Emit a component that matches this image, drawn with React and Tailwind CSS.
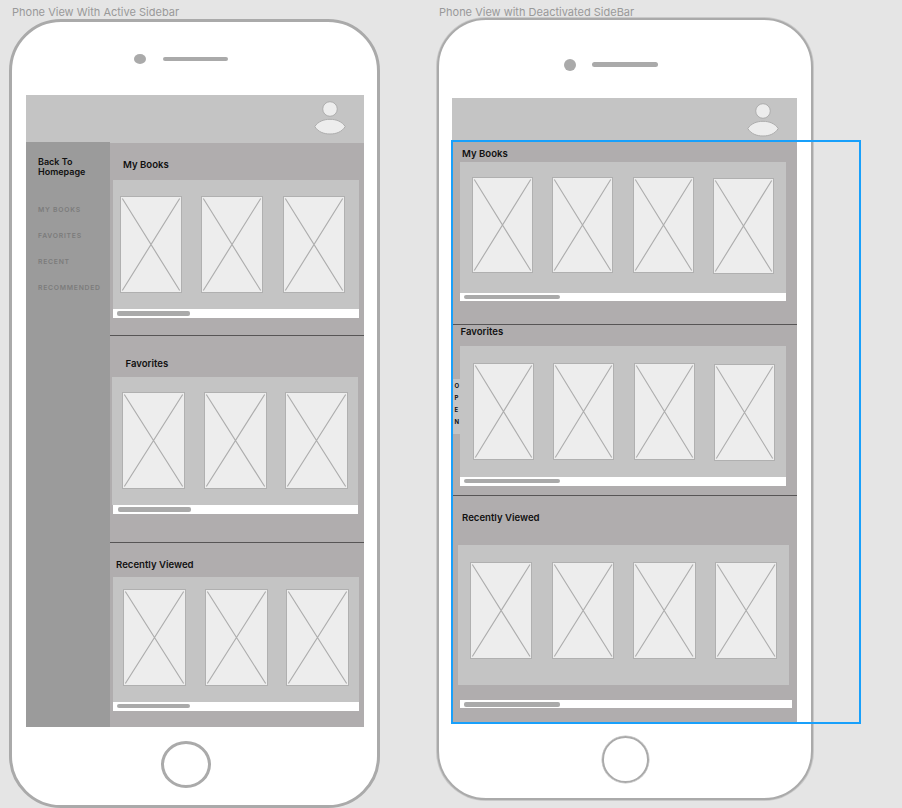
import React from "react";

function Placeholder({ className }) {
  return (
    <div className={`shrink-0 border border-[#b0b0b0] bg-[#ededed] ${className}`}>
      <svg className="block h-full w-full" viewBox="0 0 60 95" preserveAspectRatio="none">
        <path d="M1.3 1.5 58.7 93.5M58.7 1.5 1.3 93.5" stroke="#adadad" strokeWidth="1.15" fill="none" />
      </svg>
    </div>
  );
}

function Shelf({ title, count, section, heading, panel, card, track, thumb }) {
  return (
    <section className={`flex shrink-0 flex-col items-start ${section}`}>
      <h2 className={`h-3 whitespace-nowrap text-[9.6px] leading-3 font-semibold text-[#111] ${heading}`}>{title}</h2>
      <div className={`flex shrink-0 bg-[#c4c4c4] ${panel}`}>
        {Array.from({ length: count }, (_, i) => (
          <Placeholder key={i} className={card} />
        ))}
      </div>
      <div className={`flex shrink-0 bg-white ${track}`}>
        <div className={`rounded-[2px] bg-[#aaaaaa] ${thumb}`} />
      </div>
    </section>
  );
}

function Avatar({ className }) {
  return (
    <svg className={`block h-[36px] w-[34px] shrink-0 ${className}`} viewBox="0 0 34 36">
      <g fill="#ededed" stroke="#adadad" strokeWidth="1">
        <circle cx="17" cy="9" r="7.3" />
        <path d="M1.8 26.5C5 21.6 10.5 19.3 17 19.3S29 21.6 32.2 26.5C29 31.8 23.5 34 17 34S5 31.8 1.8 26.5Z" />
      </g>
    </svg>
  );
}

const links = ["MY BOOKS", "FAVORITES", "RECENT", "RECOMMENDED"];

function ActivePhone() {
  return (
    <div className="ml-[9px] w-[371px] shrink-0">
      <p className="h-[19px] pt-[5px] pl-[3px] text-[11px] leading-[14px] whitespace-nowrap text-[#999]">
        Phone View With Active Sidebar
      </p>
      <div className="flex h-[789px] w-[371px] flex-col rounded-[52px] border-3 border-[#aaaaaa] bg-white">
        <div className="flex h-[73px] shrink-0 items-center gap-[16.5px] pl-[122.4px]">
          <div className="h-[10px] w-[12px] rounded-[50%] bg-[#aaaaaa]" />
          <div className="h-[4px] w-[65px] rounded-full bg-[#aaaaaa]" />
        </div>
        <div className="ml-[14px] h-[632px] w-[338px] shrink-0 bg-[#c4c4c4]">
          <div className="flex h-[47px] justify-end pr-[17px]">
            <Avatar className="mt-[5px]" />
          </div>
          <div className="flex h-[585px]">
            <nav className="w-[84px] shrink-0 bg-[#9b9b9b] pl-[12px]">
              <p className="pt-[15px] text-[9px] leading-[9.5px] font-semibold text-[#111]">
                Back To
                <br />
                Homepage
              </p>
              <ul className="pt-[28px] text-[6.8px] font-semibold tracking-[0.75px] text-[#7c7c7c]">
                {links.map((link) => (
                  <li key={link} className="h-[26px] leading-[12px] whitespace-nowrap">
                    {link}
                  </li>
                ))}
              </ul>
            </nav>
            <div className="mt-px w-[254px] bg-[#b0adae]">
              <Shelf
                title="My Books"
                count={3}
                section="h-[193px] border-b border-[#575556]"
                heading="mt-[16px] ml-[13px]"
                panel="ml-[3px] mt-[9px] h-[129px] w-[246px] gap-[19.4px] pl-[7px] pt-[16px]"
                card="h-[97px] w-[62px]"
                track="ml-[3px] h-[9px] w-[246px] pl-[4px] pt-[2px]"
                thumb="h-[5px] w-[73px]"
              />
              <Shelf
                title="Favorites"
                count={3}
                section="h-[207px] border-b border-[#575556]"
                heading="mt-[22px] ml-[15.5px]"
                panel="ml-[2px] mt-[7px] h-[128px] w-[246px] gap-[18.7px] pl-[10px] pt-[15px]"
                card="h-[97px] w-[63px]"
                track="ml-[3px] h-[9px] w-[245px] pl-[5px] pt-[2px]"
                thumb="h-[5px] w-[73px]"
              />
              <Shelf
                title="Recently Viewed"
                count={3}
                section="h-[184px]"
                heading="mt-[16px] ml-[6px]"
                panel="ml-[3px] mt-[6px] h-[125px] w-[246px] gap-[18.7px] pl-[10px] pt-[12px]"
                card="h-[97px] w-[63px]"
                track="ml-[3px] h-[9px] w-[246px] pl-[4px] pt-[2px]"
                thumb="h-[4px] w-[73px]"
              />
            </div>
          </div>
        </div>
        <div className="mt-[14px] ml-[149px] h-[47px] w-[50px] shrink-0 rounded-[50%] border-3 border-[#aaaaaa]" />
      </div>
    </div>
  );
}

function CollapsedPhone() {
  return (
    <div className="ml-[57px] w-[376px] shrink-0">
      <p className="h-[18px] pt-[5px] pl-[2px] text-[11px] leading-[14px] whitespace-nowrap text-[#999]">
        Phone View with Deactivated SideBar
      </p>
      <div className="flex h-[782px] w-[376px] flex-col rounded-[49px] border-2 border-[#aaaaaa] bg-white shadow-[0_0_0_1px_#c9c9c9]">
        <div className="flex h-[78px] shrink-0 items-center gap-[16.8px] pt-[11px] pl-[124.7px]">
          <div className="h-[12px] w-[12px] rounded-full bg-[#aaaaaa]" />
          <div className="h-[5px] w-[66px] rounded-full bg-[#aaaaaa]" />
        </div>
        <div className="relative ml-[13px] h-[624px] w-[345px] shrink-0 bg-[#c4c4c4]">
          <div className="flex h-[43px] justify-end pr-[17px]">
            <Avatar className="mt-[4px]" />
          </div>
          <div className="h-[581px] bg-[#b0adae]">
            <Shelf
              title="My Books"
              count={4}
              section="h-[184px] border-b border-[#575556]"
              heading="mt-[7px] ml-[10px]"
              panel="ml-[8px] mt-[2px] h-[131px] w-[326px] gap-[19.4px] pl-[12px] pt-[15px]"
              card="h-[96px] w-[61px] last:mt-px"
              track="ml-[8px] h-[8px] w-[326px] pl-[4px] pt-[2px]"
              thumb="h-[4px] w-[96px]"
            />
            <Shelf
              title="Favorites"
              count={4}
              section="h-[171px] border-b border-[#575556]"
              heading="mt-[1px] ml-[8.5px]"
              panel="ml-[8px] mt-[8px] h-[131px] w-[326px] gap-[19.1px] pl-[13.4px] pt-[17px]"
              card="h-[97px] w-[61px] last:mt-px"
              track="ml-[8px] h-[9px] w-[326px] pl-[4px] pt-[2px]"
              thumb="h-[4px] w-[96px]"
            />
            <Shelf
              title="Recently Viewed"
              count={4}
              section="h-[226px]"
              heading="mt-[16px] ml-[10px]"
              panel="ml-[6px] mt-[21px] h-[140px] w-[331px] gap-[19.4px] pl-[12px] pt-[17px]"
              card="h-[97px] w-[62.3px]"
              track="ml-[8px] mt-[15px] h-[8px] w-[332px] pl-[4px] pt-[2px]"
              thumb="h-[5px] w-[96px]"
            />
          </div>
          <div className="absolute top-[281px] left-[1px] flex h-[55px] w-[7px] flex-col bg-[#c4c4c4] pt-[1px] pl-[1.5px] text-[6px] leading-[12px] font-bold text-[#111]">
            {["O", "P", "E", "N"].map((letter) => (
              <span key={letter}>{letter}</span>
            ))}
          </div>
        </div>
        <div className="mt-[14px] ml-[163px] h-[47px] w-[47px] shrink-0 rounded-full border-2 border-[#aaaaaa] shadow-[0_0_0_0.5px_#c4c4c4]" />
      </div>
    </div>
  );
}

export default function App() {
  return (
    <main className="relative flex h-[808px] w-[902px] items-start overflow-hidden bg-[#e5e5e5] font-[Inter,sans-serif]">
      <ActivePhone />
      <CollapsedPhone />
      <div className="pointer-events-none absolute top-[139.5px] left-[451px] h-[584px] w-[410px] border-2 border-[#18a0fb]" />
    </main>
  );
}
